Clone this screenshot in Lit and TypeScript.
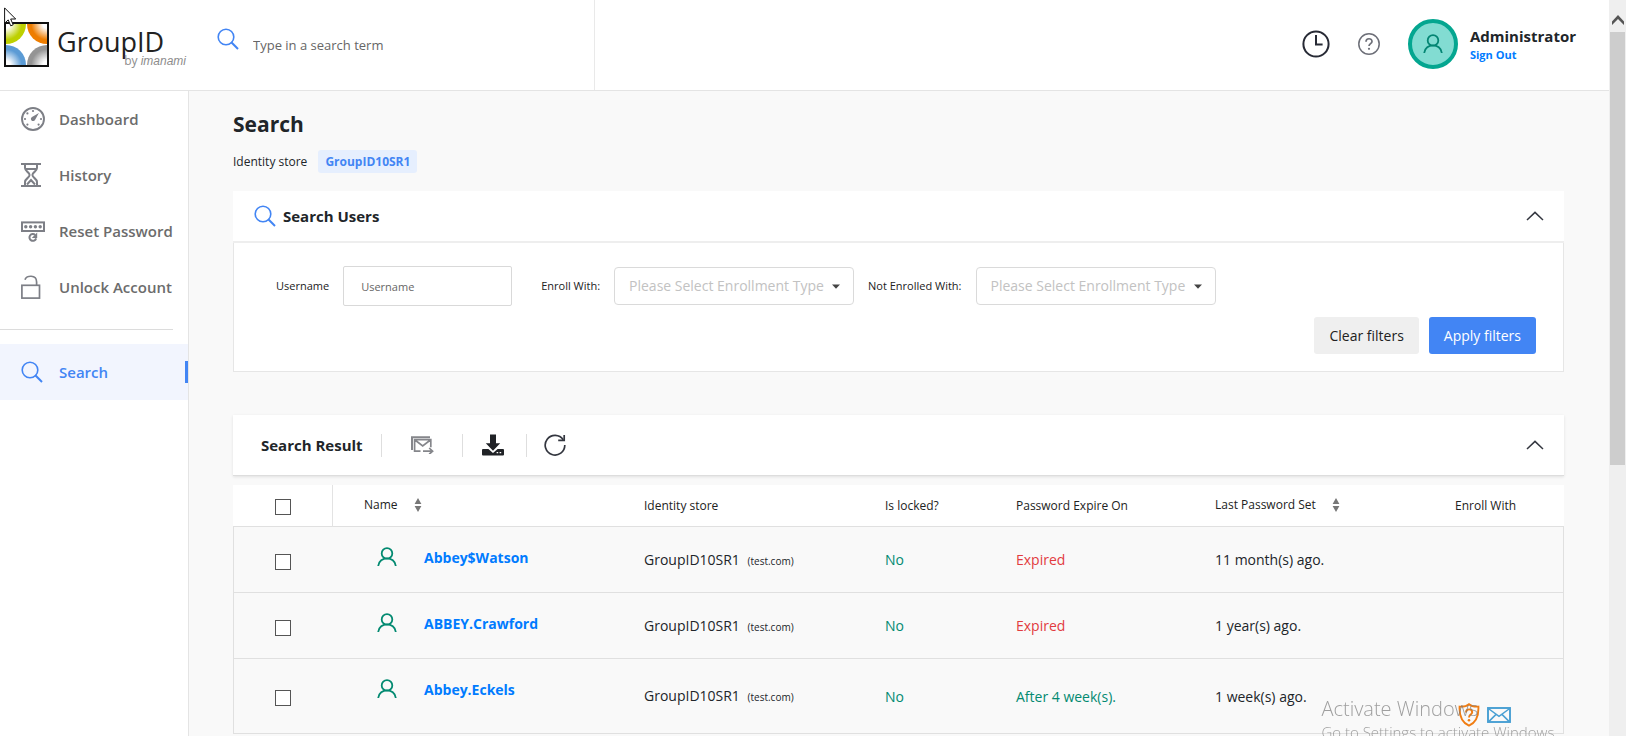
import { LitElement, html, css, svg } from "lit";
import { customElement, property } from "lit/decorators.js";
import { classMap } from "lit/directives/class-map.js";

type User = {
  name: string;
  store: string;
  domain: string;
  locked: string;
  expires: string;
  expired: boolean;
  lastSet: string;
  enrolled: boolean;
};

const users: User[] = [
  { name: "Abbey$Watson", store: "GroupID10SR1", domain: "(test.com)", locked: "No", expires: "Expired", expired: true, lastSet: "11 month(s) ago.", enrolled: false },
  { name: "ABBEY.Crawford", store: "GroupID10SR1", domain: "(test.com)", locked: "No", expires: "Expired", expired: true, lastSet: "1 year(s) ago.", enrolled: false },
  { name: "Abbey.Eckels", store: "GroupID10SR1", domain: "(test.com)", locked: "No", expires: "After 4 week(s).", expired: false, lastSet: "1 week(s) ago.", enrolled: true },
];

/* Each glyph is [width, height, drawing]. */
const glyphs: Record<string, [number, number, unknown]> = {
  search: [22, 22, svg`<g fill="none" stroke="currentColor"><circle cx="9" cy="9" r="7.8" stroke-width="1.6"/><path d="M14.3 14.3 21 21" stroke-width="2"/></g>`],
  gauge: [24, 24, svg`<circle cx="12" cy="12" r="11" fill="none" stroke="currentColor" stroke-width="1.9"/><path d="M17.9 6.100 11 10a2.200 2.200 0 1 0 3 3z" fill="currentColor"/><g fill="currentColor"><circle cx="12" cy="4" r="1.100"/><circle cx="6.400" cy="6.400" r="1.100"/><circle cx="4" cy="12" r="1.100"/><circle cx="6.400" cy="17.600" r="1.100"/><circle cx="17.600" cy="17.600" r="1.100"/><circle cx="20" cy="12" r="1.100"/></g>`],
  hourglass: [24, 24, svg`<g fill="none" stroke="currentColor" stroke-width="2"><path d="M0 1h20M0 23h20M4 1v4c0 3.400 4.600 4.200 4.600 7S4 15.600 4 19v4M16 1v4c0 3.400-4.600 4.200-4.600 7s4.600 3.600 4.600 7v4M4 6h12M6 21.500l4-4.500 4 4.500"/></g>`],
  reset: [24, 24, svg`<rect x="1" y="3.400" width="22" height="8.600" fill="none" stroke="currentColor" stroke-width="2"/><g fill="currentColor"><circle cx="4.800" cy="7.700" r="1.700"/><circle cx="9.600" cy="7.700" r="1.700"/><circle cx="14.400" cy="7.700" r="1.700"/><circle cx="19.200" cy="7.700" r="1.700"/><path d="M16.200 13.600v5.400h-5.400z"/></g><path d="M14.200 16a3.400 3.400 0 1 0 .9 3.400" fill="none" stroke="currentColor" stroke-width="2"/>`],
  unlock: [24, 24, svg`<g fill="none" stroke="currentColor" stroke-width="1.700"><rect x=".9" y="10.300" width="17.600" height="12.800"/><path d="M4 4.800C5 .2 15.600-.8 15.600 7v3.500"/></g>`],
  clock: [28, 28, svg`<g fill="none" stroke="currentColor" stroke-width="2"><circle cx="14" cy="14" r="12.600"/><path d="M14 5v9.400h6.600"/></g>`],
  help: [22, 22, svg`<g fill="none" stroke="currentColor" stroke-width="1.500"><circle cx="11" cy="11" r="10.200"/><path d="M8 8.800c0-4 6-4 6-.4 0 2.200-3 2.300-3 4.600" stroke-width="1.700"/></g><circle cx="11" cy="15.800" r="1.100" fill="currentColor"/>`],
  person: [20, 20, svg`<g fill="none" stroke="currentColor" stroke-width="1.800"><circle cx="10" cy="6.400" r="5.300"/><path d="M1.200 19C2.200 8.800 17.800 8.800 18.800 19"/></g>`],
  up: [18, 10, svg`<path d="m1 9 8-7.600L17 9" fill="none" stroke="currentColor" stroke-width="1.500"/>`],
  caret: [8, 5, svg`<path d="M0 .400h8L4 4.800z" fill="currentColor"/>`],
  sort: [8, 14, svg`<path d="M4 0 7.400 6H.6zM4 14 .6 8h6.800z" fill="currentColor"/>`],
  send: [23, 18, svg`<path d="M1 14V1.200h18" fill="none" stroke="currentColor" stroke-width="2"/><g fill="none" stroke="currentColor" stroke-width="1.700"><path d="M9.500 15.200H3.600V3.600h16.200v7.600M4 4l7.700 6L19.400 4M12 15.200h9.500M18.200 12l3.400 3.200-3.400 3"/></g>`],
  download: [22, 22, svg`<path d="M8 .4h6v8.800h4.200L11 16.800 3.800 9.200H8z" fill="currentColor"/><path d="M1 15h5.400l4.600 4 4.600-4H21q1 0 1 1v4.600q0 1-1 1H1q-1 0-1-1V16q0-1 1-1z" fill="currentColor"/><path d="M14.600 18.600h1.600M17.600 18.600h1.600" stroke="#fff" stroke-width="1.300"/>`],
  refresh: [22, 22, svg`<g fill="none" stroke="currentColor" stroke-width="1.700"><path d="M19.200 5.800A9.800 9.800 0 1 0 20.800 11"/><path d="M20.200 1v5.400h-6"/></g>`],
  shield: [22, 24, svg`<path d="M11 1.200C13.500 3.400 17 3.800 20.400 3.600 20.800 12 19 19 11 22.600 3 19 1.200 12 1.600 3.600 5 3.800 8.500 3.400 11 1.200z" fill="none" stroke="currentColor" stroke-width="1.900"/><path d="M8 9.600c0-4.400 6.200-4 6.200-.4 0 2.400-3.200 2.400-3.200 5.200" fill="none" stroke="currentColor" stroke-width="1.900"/><circle cx="11" cy="17.200" r="1.300" fill="currentColor"/>`],
  mail: [24, 16, svg`<g fill="none" stroke="currentColor" stroke-width="1.900"><rect x="1" y="1" width="22" height="14"/><path d="M2 2l10 7.400L22 2M2 14.400l6.800-6.800M22 14.400l-6.800-6.800" stroke-width="1.500"/></g>`],
  scroll: [12, 10, svg`<path d="M0 6.600 6 0l6 6.600V10L6 4 0 10z" fill="#555"/>`],
  pointer: [13, 20, svg`<path d="M.6.900v15.400l3.600-3.400 2.500 5.900 2.500-1-2.500-5.800h5z" fill="#fff" stroke="#111"/>`],
};

@customElement("app-icon")
export class AppIcon extends LitElement {
  static styles = css`
    :host { display: inline-flex; flex: none; }
    svg { display: block; }
  `;
  @property() name = "search";
  render() {
    const [w, h, art] = glyphs[this.name];
    return html`<svg width=${w} height=${h} viewBox="0 0 ${w} ${h}" aria-hidden="true">${art}</svg>`;
  }
}

@customElement("app-logo")
export class AppLogo extends LitElement {
  static styles = css`
    :host { display: flex; gap: 8px; align-items: center; font-family: "Open Sans", "Noto Sans", sans-serif; }
    svg { display: block; flex: none; }
    .words { flex: 1; display: flex; flex-direction: column; padding: 8px 3px 0 0; }
    .brand { font-size: 27px; line-height: 26px; color: #222; }
    .by { align-self: flex-end; font-size: 12px; line-height: 12px; color: #8c8c8c; white-space: nowrap; }
    .by i { font-family: "Liberation Sans", sans-serif; }
  `;
  render() {
    const grad = (id: string, cx: number, cy: number, colour: string) => svg`
      <radialGradient id=${id} gradientUnits="userSpaceOnUse" cx=${cx} cy=${cy} r="21">
        <stop offset=".2" stop-color="#fff"/><stop offset=".75" stop-color=${colour}/><stop offset="1" stop-color=${colour}/>
      </radialGradient>`;
    return html`
      <svg width="45" height="45" viewBox="0 0 45 45" role="img" aria-label="GroupID">
        <defs>${grad("a", 2, 2, "#bdd000")}${grad("b", 43, 2, "#ee7d00")}${grad("c", 2, 43, "#5b9bd5")}${grad("d", 43, 43, "#949494")}</defs>
        <path d="M0 0h45v45H0z" fill="#fff"/>
        <circle cx="2" cy="2" r="20" fill="url(#a)"/><circle cx="43" cy="2" r="20" fill="url(#b)"/>
        <circle cx="2" cy="43" r="20" fill="url(#c)"/><circle cx="43" cy="43" r="20" fill="url(#d)"/>
        <path d="M1 1h43v43H1z" fill="none" stroke="#111" stroke-width="2"/>
      </svg>
      <div class="words">
        <span class="brand">GroupID</span>
        <span class="by">by <i>imanami</i></span>
      </div>`;
  }
}

@customElement("app-root")
export class AppRoot extends LitElement {
  static styles = css`
    :host { display: flex; height: 100vh; overflow: hidden; background: #f9f9f9; color: #212529; font-family: "Open Sans", "Noto Sans", sans-serif; font-size: 14px; line-height: 20px; }
    * { box-sizing: border-box; }
    a { text-decoration: none; color: inherit; }
    button { font: inherit; color: inherit; border: 0; background: none; padding: 0; cursor: pointer; display: inline-flex; }
    input, select { font: inherit; min-width: 0; }
    h1, h2 { margin: 0; }

    .page { flex: 1; min-width: 0; display: grid; grid-template: 91px 1fr / 189px 1fr; overflow: hidden; }
    .top { grid-column: 1 / -1; display: flex; background: #fff; border-bottom: 1px solid #e4e4e4; }
    .logo { width: 189px; padding: 0 0 2px 4px; }
    .finder { display: flex; align-items: center; gap: 14px; width: 406px; padding: 0 20px 0 28px; border-right: 1px solid #e9e9e9; color: #4285f4; }
    .finder app-icon { margin-bottom: 12px; }
    .finder input { flex: 1; border: 0; outline: 0; padding: 0; font-size: 13px; font-weight: 500; background: none; }
    .finder input::placeholder { color: #666; opacity: 1; }
    .account { margin-left: auto; display: flex; align-items: center; padding: 0 33px 3px 0; color: #6d6f78; }
    .clock { color: #272a35; margin-right: 28px; }
    .avatar { display: flex; align-items: center; justify-content: center; width: 50px; height: 50px; margin: 0 12px 0 28px; border: 4px solid #04a690; border-radius: 50%; background: #82dcd2; color: #048573; }
    .who { display: flex; flex-direction: column; padding-top: 2px; }
    .who strong { font-size: 15px; line-height: 20px; color: #212529; }
    .who a { font-size: 11px; line-height: 17px; font-weight: 700; color: #007bff; }

    .side { background: #fff; border-right: 1px solid #e4e4e4; }
    .item { display: flex; align-items: center; height: 56px; padding-left: 21px; gap: 14px; font-size: 15px; font-weight: 600; color: #6c6c6c; }
    .item app-icon { width: 24px; color: #7d7f86; }
    .side hr { margin: 14px 15px 14px 0; border: 0; height: 1px; background: #dcdcdc; }
    .current, .current app-icon { color: #4285f4; }
    .current { background: #f2f5fe; }
    .current::after { content: ""; width: 3px; height: 22px; margin-left: auto; background: #4285f4; }

    .main { padding: 19px 45px 0 44px; min-width: 0; }
    h1 { font-size: 21px; line-height: 28px; }
    .store { display: flex; align-items: center; gap: 11px; margin: 12px 0 18px; font-size: 12px; line-height: 23px; }
    .badge { padding: 0 7px; border-radius: 3px; background: #e6effe; color: #4285f4; font-weight: 700; }
    .head { display: flex; align-items: center; background: #fff; padding: 0 20px 0 21px; }
    .head h2 { font-size: 15px; line-height: 20px; }
    .head .fold { margin-left: auto; color: #33363f; }
    .users { height: 52px; gap: 7px; border-bottom: 2px solid #eee; }
    .users > app-icon { color: #4285f4; }
    .filters { background: #fff; border: 1px solid #e6e6e6; border-top: 0; padding: 23px 27px 17px 42px; }
    .fields { display: flex; align-items: center; gap: 14px; font-size: 11px; line-height: 16px; color: #222; }
    .name { width: 169px; height: 40px; margin-right: 15px; padding: 0 17px; border: 1px solid #d9d9d9; border-radius: 2px; }
    .name::placeholder { color: #666; opacity: 1; }
    .pick { display: flex; align-items: center; width: 240px; height: 38px; padding: 0 13px 0 14px; border: 1px solid #dadada; border-radius: 4px; color: #444; }
    .pick select { flex: 1; appearance: none; border: 0; outline: 0; padding: 0; background: none; font-size: 14px; line-height: 20px; color: #c2c2c2; }
    .actions { display: flex; justify-content: flex-end; gap: 10px; margin-top: 11px; }
    .actions button { height: 37px; padding: 0 15px; align-items: center; border-radius: 3px; background: #efefef; color: #212121; }
    .actions .primary { background: #4285f4; color: #fff; }

    .result { height: 61px; margin-top: 43px; padding-left: 28px; border-bottom: 1px solid #ddd; box-shadow: 0 1px 3px #0000001a; }
    .tools { display: flex; align-items: center; margin-left: 18px; }
    .tools button { height: 23px; align-items: center; border-left: 1px solid #dedede; }
    .send { width: 81px; padding-left: 29px; color: #85868b; }
    .load { width: 64px; padding-left: 19px; color: #202226; }
    .again { padding-left: 17px; color: #33363f; }

    table { width: 100%; margin-top: 9px; border-collapse: separate; border-spacing: 0; table-layout: fixed; border: 0; }
    .c1 { width: 100px; } .c2 { width: 311px; } .c3 { width: 241px; } .c4 { width: 131px; }
    .c5 { width: 199px; } .c6 { width: 240px; } .c7 { width: 109px; }
    th, td { padding: 1px 0 0; text-align: left; border-bottom: 1px solid #e0e0e0; }
    th { height: 42px; background: #fff; font-size: 12px; font-weight: 400; line-height: 16px; color: #222; }
    th:first-child { border-right: 1px solid #e3e3e3; }
    td { height: 66px; }
    td:first-child { border-left: 1px solid #e0e0e0; }
    td:last-child { border-right: 1px solid #e0e0e0; }
    .tick { padding: 4px 0 0 42px; }
    th.tick { padding-top: 2px; }
    td.tick { padding-left: 41px; }
    .tick input { display: block; appearance: none; width: 16px; height: 16px; margin: 0; border: 1px solid #555; background: #fff; }
    .who-head { padding-left: 31px; }
    .sorted { display: inline-flex; align-items: center; gap: 16px; padding-bottom: 2px; color: #222; }
    .sorted app-icon { color: #777; }
    .person { padding: 20px 0 0 44px; vertical-align: top; }
    .person a { display: flex; align-items: center; gap: 27px; line-height: 22px; font-weight: 700; color: #007bff; }
    .person app-icon { color: #038a71; padding-bottom: 2px; }
    .domain { font-size: 10px; margin-left: 4px; }
    .good { color: #038a71; }
    .bad { color: #e23b3f; }
    .marks { display: flex; align-items: center; gap: 7px; padding: 43px 0 6px 3px; color: #489fd3; }
    .shield { color: #f07d13; }

    .bar { width: 17px; flex: none; background: #efefef; padding: 15px 1px 0; display: flex; flex-direction: column; align-items: center; gap: 7px; }
    .thumb { width: 100%; height: 60%; background: #cdcdcd; }
    .cursor { position: absolute; left: 4px; top: 7px; pointer-events: none; }
    .notice { position: fixed; right: 68px; bottom: -6px; display: flex; flex-direction: column; color: #777777b0; pointer-events: none; font-weight: 300; }
    .notice strong { font-size: 20px; line-height: 27px; font-weight: 300; }
    .notice span { font-size: 15px; line-height: 20px; }
  `;

  private nav(icon: string, label: string, current = false) {
    return html`<a href="#" class=${classMap({ item: true, current })}><app-icon name=${icon}></app-icon>${label}</a>`;
  }

  private picker(id: string) {
    return html`<span class="pick"><select id=${id}><option>Please Select Enrollment Type</option></select><app-icon name="caret"></app-icon></span>`;
  }

  private row(u: User) {
    return html`<tr>
      <td class="tick"><input type="checkbox" aria-label="Select ${u.name}" /></td>
      <td class="person"><a href="#"><app-icon name="person"></app-icon>${u.name}</a></td>
      <td>${u.store} <span class="domain">${u.domain}</span></td>
      <td class="good">${u.locked}</td>
      <td class=${u.expired ? "bad" : "good"}>${u.expires}</td>
      <td>${u.lastSet}</td>
      <td>${u.enrolled ? html`<div class="marks"><app-icon class="shield" name="shield"></app-icon><app-icon name="mail"></app-icon></div>` : ""}</td>
    </tr>`;
  }

  render() {
    return html`
      <div class="page">
        <header class="top">
          <app-logo class="logo"></app-logo>
          <label class="finder"><app-icon name="search"></app-icon><input type="text" placeholder="Type in a search term" aria-label="Search" /></label>
          <div class="account">
            <button class="clock" aria-label="History"><app-icon name="clock"></app-icon></button>
            <button aria-label="Help"><app-icon name="help"></app-icon></button>
            <span class="avatar"><app-icon name="person"></app-icon></span>
            <div class="who"><strong>Administrator</strong><a href="#">Sign Out</a></div>
          </div>
        </header>
        <nav class="side">
          ${this.nav("gauge", "Dashboard")}
          ${this.nav("hourglass", "History")}
          ${this.nav("reset", "Reset Password")}
          ${this.nav("unlock", "Unlock Account")}
          <hr />
          ${this.nav("search", "Search", true)}
        </nav>
        <main class="main">
          <h1>Search</h1>
          <div class="store">Identity store <span class="badge">GroupID10SR1</span></div>
          <section>
            <div class="head users"><app-icon name="search"></app-icon><h2>Search Users</h2><button class="fold" aria-label="Collapse"><app-icon name="up"></app-icon></button></div>
            <div class="filters">
              <div class="fields">
                <label for="username">Username</label>
                <input id="username" class="name" type="text" placeholder="Username" />
                <label for="with">Enroll With:</label>
                ${this.picker("with")}
                <label for="without">Not Enrolled With:</label>
                ${this.picker("without")}
              </div>
              <div class="actions"><button>Clear filters</button><button class="primary">Apply filters</button></div>
            </div>
          </section>
          <section>
            <div class="head result">
              <h2>Search Result</h2>
              <div class="tools">
                <button class="send" aria-label="Send"><app-icon name="send"></app-icon></button>
                <button class="load" aria-label="Download"><app-icon name="download"></app-icon></button>
                <button class="again" aria-label="Refresh"><app-icon name="refresh"></app-icon></button>
              </div>
              <button class="fold" aria-label="Collapse"><app-icon name="up"></app-icon></button>
            </div>
            <table>
              <colgroup><col class="c1" /><col class="c2" /><col class="c3" /><col class="c4" /><col class="c5" /><col class="c6" /><col class="c7" /></colgroup>
              <thead>
                <tr>
                  <th class="tick"><input type="checkbox" aria-label="Select all" /></th>
                  <th class="who-head"><button class="sorted">Name <app-icon name="sort"></app-icon></button></th>
                  <th>Identity store</th>
                  <th>Is locked?</th>
                  <th>Password Expire On</th>
                  <th><button class="sorted">Last Password Set <app-icon name="sort"></app-icon></button></th>
                  <th>Enroll With</th>
                </tr>
              </thead>
              <tbody>${users.map((u) => this.row(u))}</tbody>
            </table>
          </section>
        </main>
      </div>
      <div class="bar"><app-icon name="scroll"></app-icon><div class="thumb"></div></div>
      <app-icon class="cursor" name="pointer"></app-icon>
      <div class="notice"><strong>Activate Windows</strong><span>Go to Settings to activate Windows.</span></div>
    `;
  }
}
